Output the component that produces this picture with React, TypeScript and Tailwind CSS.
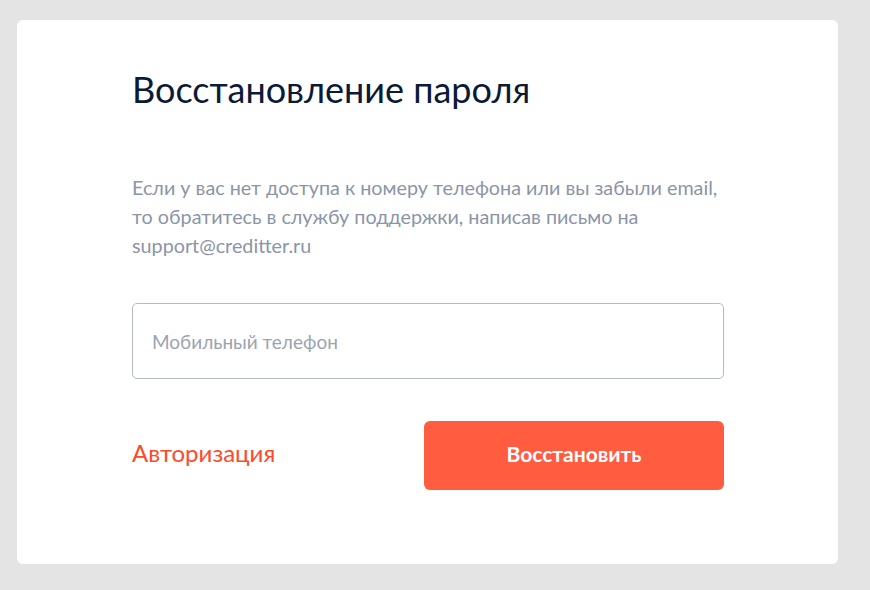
import * as React from "react"

export default function App() {
  const [phone, setPhone] = React.useState("")

  return (
    <div className="min-h-[590px] w-full bg-[#e4e4e4] pt-[20px] pl-[17px] pr-[32px] pb-[26px] font-['Lato','Noto_Sans',sans-serif]">
      <div className="w-[821px] h-[544px] rounded-[6px] bg-white pl-[115px] pt-[47px]">
        <div className="w-[592px]">
          <h1 className="text-[36px] leading-[44px] text-[#0b1a36] font-normal">Восстановление пароля</h1>

          <p className="mt-[62px] whitespace-nowrap text-[19.75px] leading-[29px] text-[#8b95a7]">
            Если у вас нет доступа к номеру телефона или вы забыли email,
            <br />
            то обратитесь в службу поддержки, написав письмо на
            <br />
            support@creditter.ru
          </p>

          <form
            onSubmit={(e) => {
              e.preventDefault()
            }}
          >
            <input
              value={phone}
              onChange={(e) => setPhone(e.target.value)}
              placeholder="Мобильный телефон"
              className="mt-[43px] block w-full h-[76px] rounded-[5px] border border-[#b5bac3] px-[19px] text-[19px] text-[#0b1a36] placeholder:text-[#9ba3b2] outline-none"
            />

            <div className="mt-[42px] flex items-center justify-between">
              <a href="#" className="pb-[5px] text-[24px] text-[#ff4a2a]">
                Авторизация
              </a>
              <button
                type="submit"
                className="w-[300px] h-[69px] pb-[3px] rounded-[6px] bg-[#ff5c40] text-white text-[21px] font-bold"
              >
                Восстановить
              </button>
            </div>
          </form>
        </div>
      </div>
    </div>
  )
}
